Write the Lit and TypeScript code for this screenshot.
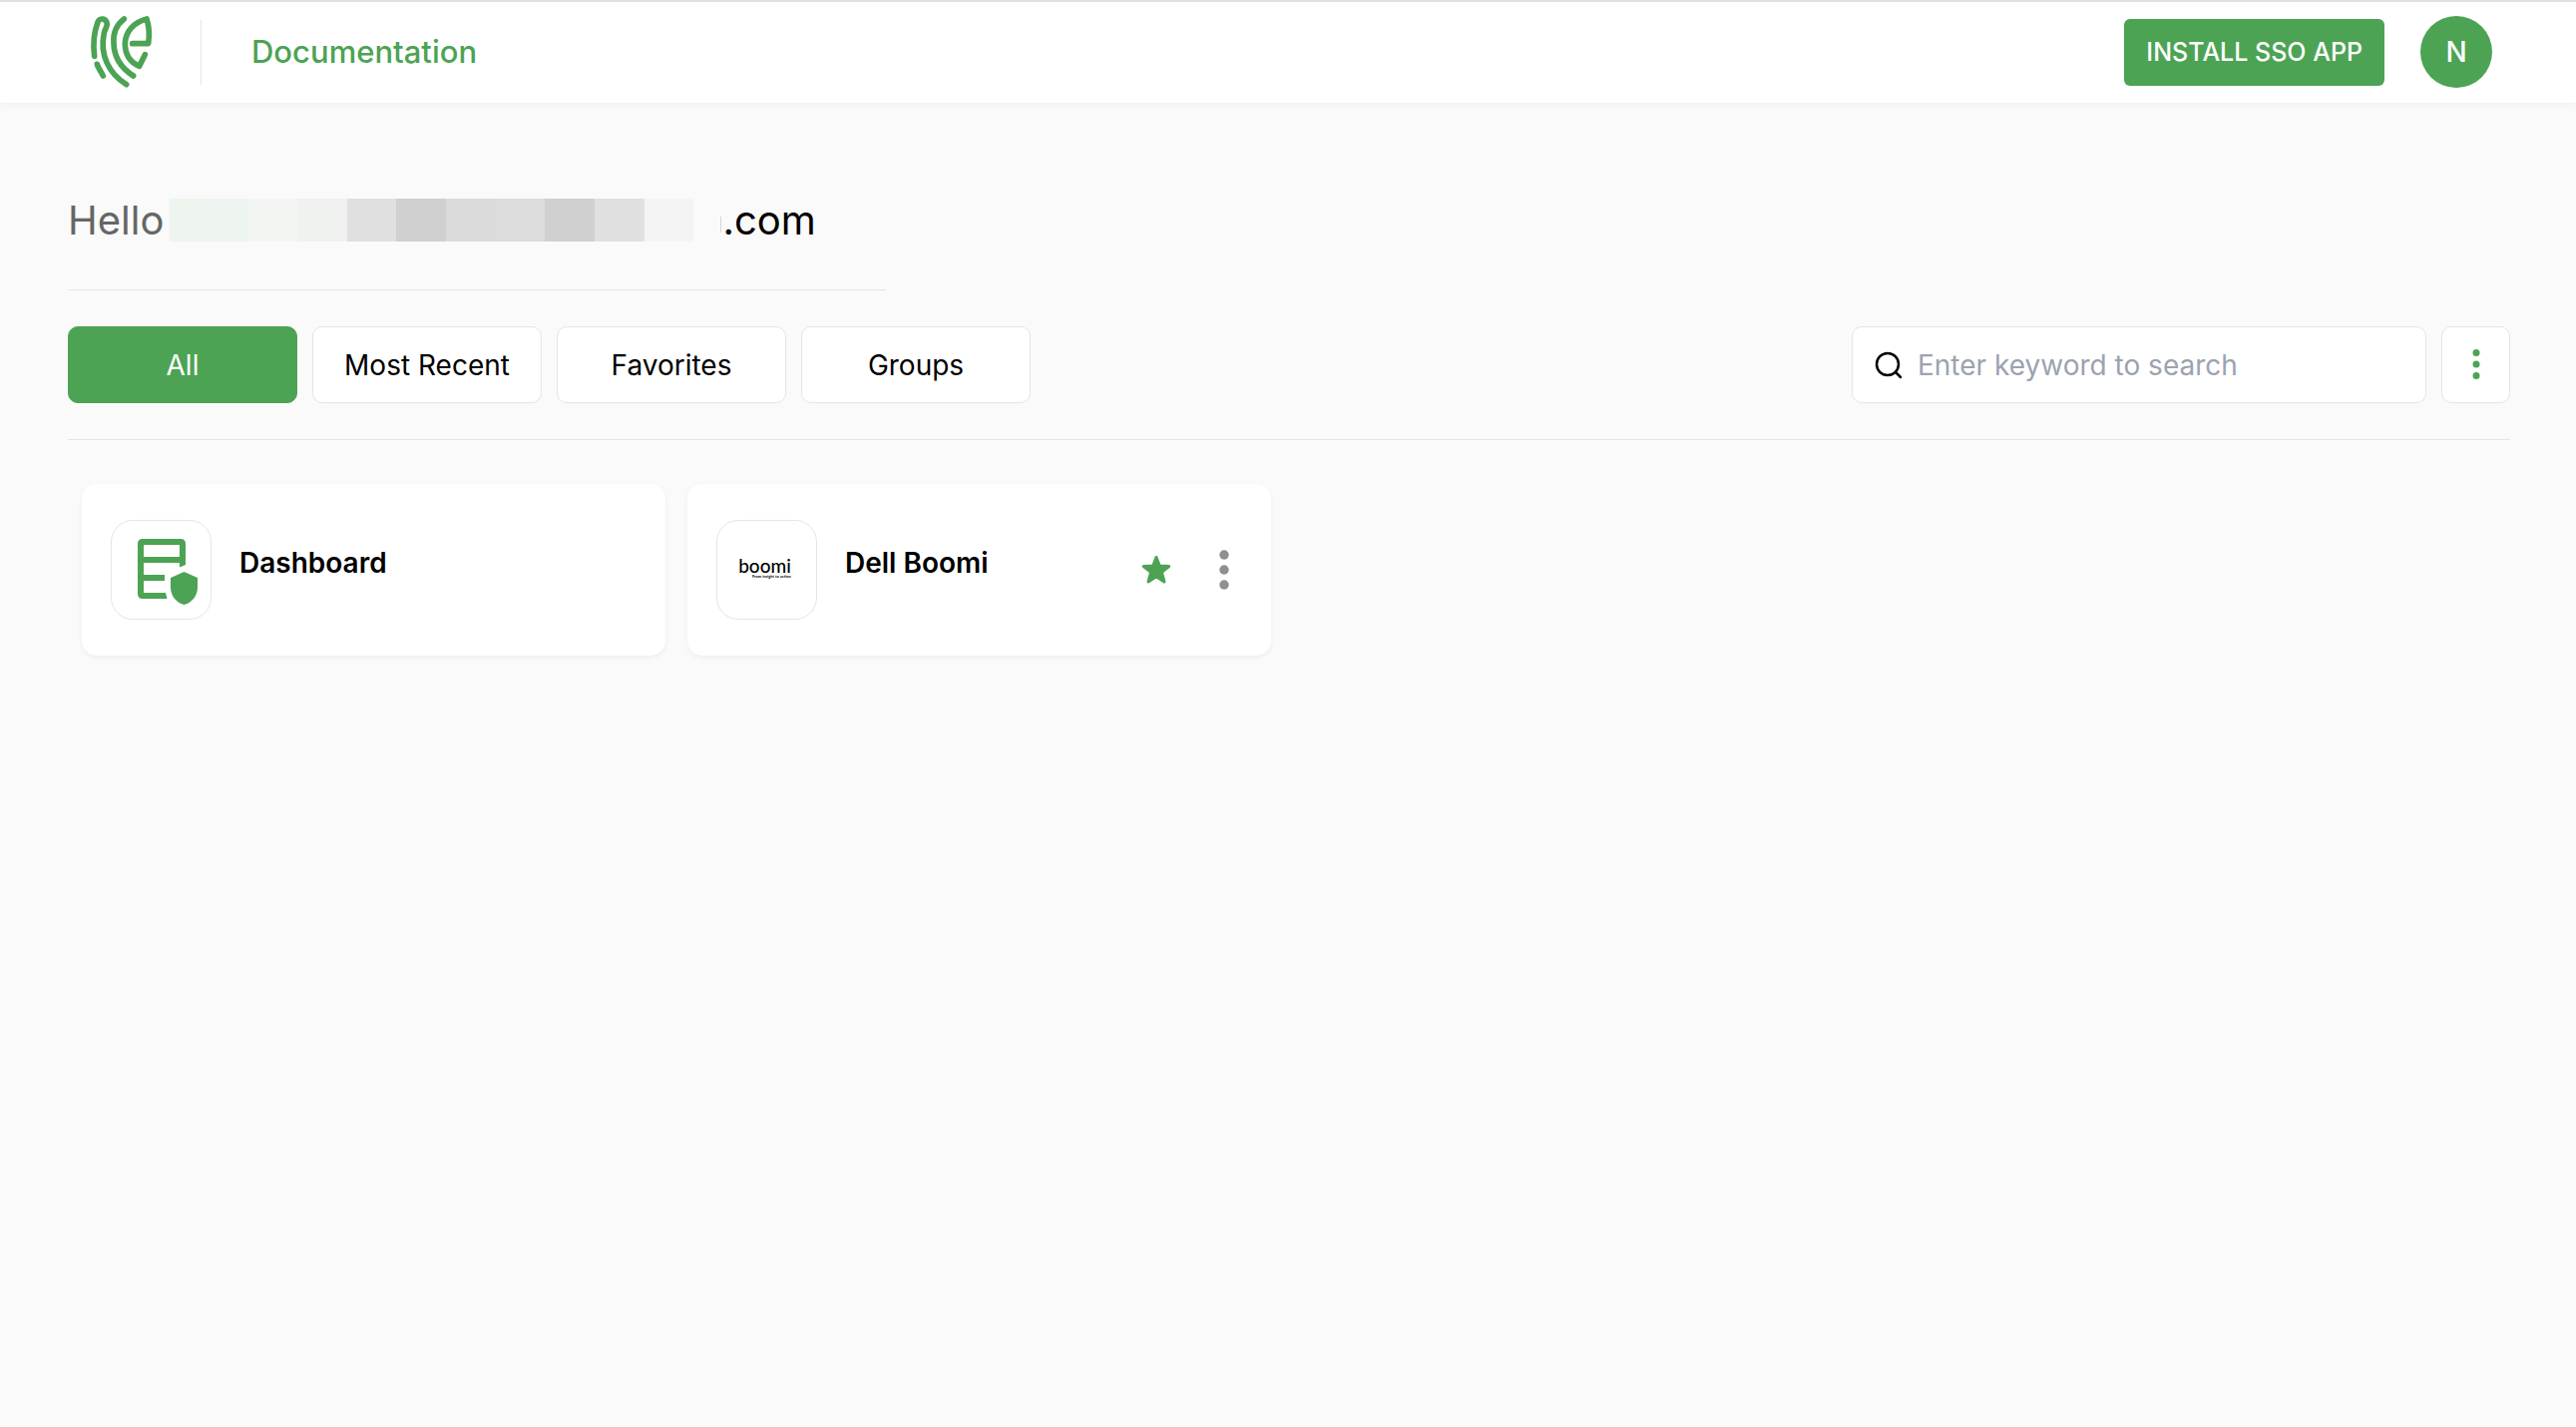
import { LitElement, html, svg, css, nothing } from "lit";
import { customElement, property, state } from "lit/decorators.js";
import { classMap } from "lit/directives/class-map.js";

interface AppEntry {
  name: string;
  icon: "dashboard" | "boomi";
  managed: boolean;
}

const TABS = ["All", "Most Recent", "Favorites", "Groups"];

const APPS: AppEntry[] = [
  { name: "Dashboard", icon: "dashboard", managed: false },
  { name: "Dell Boomi", icon: "boomi", managed: true },
];

// Shades of the blocks that hide the account name.
const MASK = [
  { tone: "#eef4ee", size: 28 },
  { tone: "#eef4f0", size: 51 },
  { tone: "#f3f5f3", size: 49 },
  { tone: "#f0f2f0", size: 50 },
  { tone: "#e0e0e0", size: 49 },
  { tone: "#d0d0d0", size: 50 },
  { tone: "#dbdbdb", size: 50 },
  { tone: "#dcdcdc", size: 49 },
  { tone: "#d0d0d0", size: 50 },
  { tone: "#e0e0e0", size: 50 },
  { tone: "#f4f4f4", size: 49 },
];

const dots = (radius: number, step: number) => svg`
  <circle cx="20" cy=${20 - step} r=${radius}></circle>
  <circle cx="20" cy="20" r=${radius}></circle>
  <circle cx="20" cy=${20 + step} r=${radius}></circle>`;

@customElement("app-card")
export class AppCard extends LitElement {
  @property({ attribute: false }) entry!: AppEntry;

  static styles = css`
    :host {
      display: block;
    }
    .card {
      display: flex;
      align-items: center;
      box-sizing: border-box;
      height: 172px;
      padding: 0 27px 0 29px;
      border-radius: 15px;
      background: #fff;
      box-shadow: 0 2px 5px rgba(0, 0, 0, 0.05);
    }
    .tile {
      display: grid;
      place-content: center;
      box-sizing: border-box;
      width: 101px;
      height: 100px;
      border: 1px solid #e5e5e5;
      border-radius: 22px;
    }
    .name {
      flex: 1;
      margin: 0 0 14px 28px;
      font-size: 28px;
      line-height: 36px;
      font-weight: 600;
      color: #000;
    }
    .dashboard {
      display: block;
      width: 60px;
      height: 66px;
      margin: 4px 0 0 12px;
      fill: #4ca354;
    }
    .wordmark {
      display: flex;
      flex-direction: column;
      align-items: flex-end;
      margin: 0 4px 4px 0;
      color: #000;
    }
    .brand {
      font: 500 19px/18px Lato, sans-serif;
    }
    .tagline {
      font: 700 4px/4px Lato, sans-serif;
    }
    .action {
      display: grid;
      place-content: center;
      width: 40px;
      height: 40px;
      padding: 0;
      border: 0;
      background: none;
      cursor: pointer;
    }
    .actions {
      display: flex;
      gap: 28px;
    }
    .glyph {
      display: block;
      width: 40px;
      height: 40px;
    }
    .star {
      fill: #4ca354;
      stroke: #4ca354;
      stroke-width: 3;
      stroke-linejoin: round;
    }
    .more {
      fill: #8f8f8f;
    }
  `;

  private renderIcon() {
    if (this.entry.icon === "dashboard") {
      return html`<svg class="dashboard" viewBox="0 0 60 66" aria-hidden="true">
        <path
          fill-rule="evenodd"
          d="M5 0H43Q48 0 48 5V26L42 28.500V24H6V36H27V42H6V54H28L29.500 60H5Q0 60 0 55V5Q0 0 5 0ZM6 6V18H42V6Z"
        ></path>
        <path d="M46.500 33L60 39V48C60 57 55 63.500 46.500 66C38 63.500 33 57 33 48V39Z"></path>
      </svg>`;
    }
    return html`<div class="wordmark">
      <span class="brand">boomi</span>
      <span class="tagline">From insight to action</span>
    </div>`;
  }

  render() {
    return html`<article class="card">
      <div class="tile">${this.renderIcon()}</div>
      <h2 class="name">${this.entry.name}</h2>
      ${this.entry.managed
        ? html`<div class="actions">
            <button class="action" aria-label="Favorite">
              <svg class="glyph star" viewBox="0 0 40 40" aria-hidden="true">
                <path
                  d="M20 7.500L23.300 16L32.800 16.500L25.400 22.300L28 32L20 26.800L12 32L14.600 22.300L7.200 16.500L16.700 16Z"
                ></path>
              </svg>
            </button>
            <button class="action" aria-label="More">
              <svg class="glyph more" viewBox="0 0 40 40" aria-hidden="true">${dots(4.7, 15)}</svg>
            </button>
          </div>`
        : nothing}
    </article>`;
  }
}

@customElement("app-root")
export class AppRoot extends LitElement {
  @state() private tab = "All";

  static styles = css`
    :host {
      display: block;
      min-height: 100vh;
      background: #fafafa;
      font-family: Inter, "Liberation Sans", sans-serif;
      color: #000;
    }
    .header {
      display: flex;
      align-items: center;
      box-sizing: border-box;
      height: 103px;
      padding: 0 84px 1px 79px;
      border-top: 2px solid #e0e0e0;
      background: #fff;
      box-shadow: 0 2px 6px rgba(0, 0, 0, 0.04);
    }
    .logo {
      display: block;
      width: 84px;
      height: 90px;
      margin-bottom: 4px;
      fill: none;
      stroke: #4ca354;
      stroke-width: 17;
      stroke-linecap: round;
      stroke-linejoin: round;
    }
    .docs {
      display: flex;
      align-items: center;
      height: 65px;
      margin-left: 38px;
      padding-left: 50px;
      border-left: 1px solid #e5e5e5;
      font-size: 31px;
      line-height: 40px;
      font-weight: 500;
      color: #4ca354;
      text-decoration: none;
    }
    .install {
      height: 67px;
      margin-left: auto;
      padding: 0 22px;
      border: 0;
      border-radius: 6px;
      background: #4ca354;
      color: #fff;
      font: 500 25px/32px Inter, sans-serif;
      cursor: pointer;
    }
    .avatar {
      width: 72px;
      height: 72px;
      margin-left: 36px;
      padding: 0;
      border: 0;
      border-radius: 50%;
      background: #4ca354;
      color: #fff;
      font: 500 28px/36px Inter, sans-serif;
      cursor: pointer;
    }
    .main {
      padding: 86px 66px 40px 68px;
    }
    .greeting {
      display: flex;
      align-items: center;
      box-sizing: border-box;
      width: 33%;
      min-width: 820px;
      height: 102px;
      margin: 0;
      padding-bottom: 38px;
      border-bottom: 1px solid #e5e5e5;
      font-size: 40px;
      line-height: 60px;
      font-weight: 400;
      white-space: nowrap;
    }
    .hello {
      color: #666;
    }
    .mask {
      display: flex;
      height: 43px;
      margin-left: 6px;
    }
    .edge {
      width: 1px;
      height: 16px;
      margin: 8px 1px 0 27px;
      background: #d8d8d8;
    }
    .toolbar {
      display: flex;
      justify-content: space-between;
      gap: 15px;
      padding: 36px 0;
      border-bottom: 1px solid #e5e5e5;
    }
    .tabs {
      display: flex;
      gap: 15px;
    }
    .tab {
      box-sizing: border-box;
      width: 230px;
      height: 77px;
      padding: 0;
      border: 1px solid #e5e5e5;
      border-radius: 10px;
      background: #fff;
      color: #000;
      font: 400 28px/36px Inter, sans-serif;
      cursor: pointer;
    }
    .active {
      border-color: #4ca354;
      background: #4ca354;
      color: #fff;
    }
    .tools {
      display: flex;
      gap: 15px;
    }
    .search {
      display: flex;
      align-items: center;
      gap: 15px;
      box-sizing: border-box;
      width: 576px;
      height: 77px;
      padding: 0 22px;
      border: 1px solid #e5e5e5;
      border-radius: 10px;
      background: #fff;
    }
    .lens {
      flex: none;
      width: 28px;
      height: 28px;
      fill: none;
      stroke: #000;
      stroke-width: 2.5;
      stroke-linecap: round;
    }
    .field {
      flex: 1;
      min-width: 0;
      padding: 0;
      border: 0;
      outline: 0;
      background: none;
      color: #000;
      font: 400 28px/36px Inter, sans-serif;
    }
    .field::placeholder {
      color: #9ca3af;
      opacity: 1;
    }
    .menu {
      display: grid;
      place-content: center;
      box-sizing: border-box;
      width: 69px;
      height: 77px;
      padding: 0 0 2px;
      border: 1px solid #e5e5e5;
      border-radius: 10px;
      background: #fff;
      cursor: pointer;
    }
    .more {
      display: block;
      width: 40px;
      height: 40px;
      fill: #4ca354;
    }
    .grid {
      display: grid;
      grid-template-columns: repeat(4, 1fr);
      gap: 22px;
      padding: 44px 28px 0 14px;
    }
  `;

  render() {
    return html`
      <header class="header">
        <svg class="logo" viewBox="0 0 252 270" role="img" aria-label="Home">
          <path d="M47 154C42 118 46 82 57 52C61 38 85 38 85 58C84 66 79 72 76 84C62 150 90 205 143 239"></path>
          <path d="M136 42C110 62 103 90 105 115C106 155 128 190 164 213"></path>
          <path d="M161 116H209C213 90 210 60 204 42C165 52 140 80 139 116C139 150 155 172 182 184L199 149"></path>
          <path d="M55 178C58 188 65 198 73 213"></path>
        </svg>
        <a class="docs" href="#documentation">Documentation</a>
        <button class="install">INSTALL SSO APP</button>
        <button class="avatar" aria-label="Account">N</button>
      </header>
      <main class="main">
        <h1 class="greeting">
          <span class="hello">Hello</span>
          <span class="mask">
            ${MASK.map((m) => html`<span style="width:${m.size}px;background:${m.tone}"></span>`)}
          </span>
          <span class="edge"></span>
          <span>.com</span>
        </h1>
        <div class="toolbar">
          <nav class="tabs">
            ${TABS.map(
              (name) => html`<button
                class=${classMap({ tab: true, active: name === this.tab })}
                @click=${() => (this.tab = name)}
              >${name}</button>`
            )}
          </nav>
          <div class="tools">
            <label class="search">
              <svg class="lens" viewBox="0 0 28 28" aria-hidden="true">
                <circle cx="13" cy="13" r="11"></circle>
                <path d="M21 21L26 26"></path>
              </svg>
              <input class="field" type="text" aria-label="Search" placeholder="Enter keyword to search" />
            </label>
            <button class="menu" aria-label="View options">
              <svg class="more" viewBox="0 0 40 40" aria-hidden="true">${dots(3.5, 11.5)}</svg>
            </button>
          </div>
        </div>
        <section class="grid">
          ${APPS.map((entry) => html`<app-card .entry=${entry}></app-card>`)}
        </section>
      </main>
    `;
  }
}
